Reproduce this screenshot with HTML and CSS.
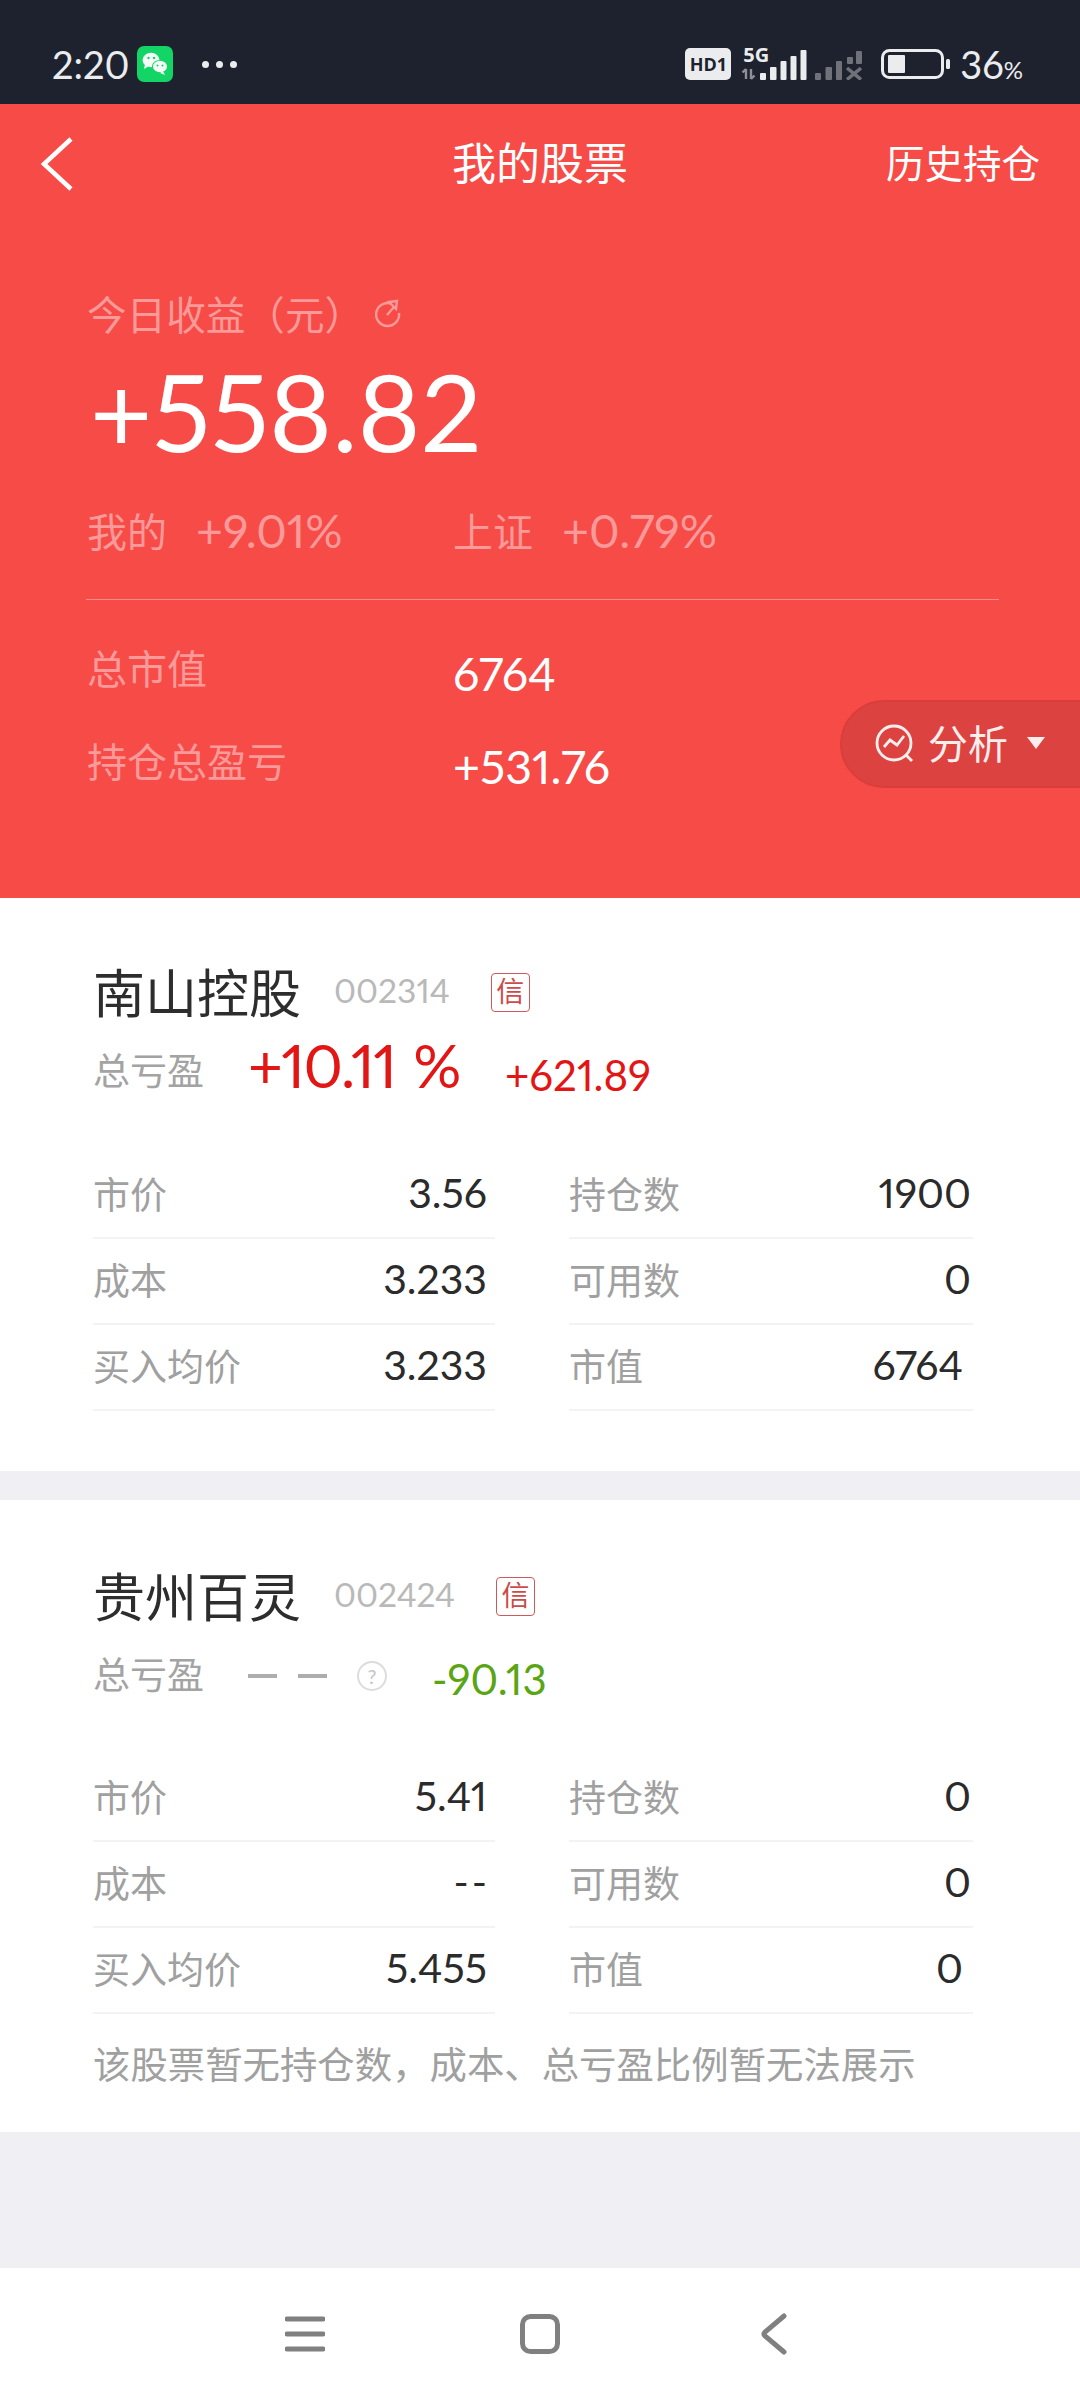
FILE: index.html
```html
<!DOCTYPE html>
<html>
<head>
    <meta name="viewport" content="width=device-width, initial-scale=1">
    <link rel="stylesheet" href="styles.css">
</head>
<body>
    <div class="status-bar">
        <span class="clock">2:20</span>
        <svg class="wechat" width="36" height="36" viewBox="0 0 36 36">
            <rect width="36" height="36" rx="7" fill="#12d566"/>
            <ellipse cx="14" cy="14" rx="8.5" ry="7.2" fill="#f4fbf6"/>
            <path d="M8 18l-1 5 5-3z" fill="#f4fbf6"/>
            <ellipse cx="23" cy="20.5" rx="8" ry="6.6" fill="#12d566"/>
            <ellipse cx="23" cy="20.5" rx="7" ry="5.8" fill="#f4fbf6"/>
            <path d="M26 25l2 4-5-2z" fill="#f4fbf6"/>
            <circle cx="11.5" cy="12" r="1.2" fill="#12d566"/>
            <circle cx="17" cy="12" r="1.2" fill="#12d566"/>
            <circle cx="20.5" cy="19.5" r="1" fill="#12d566"/>
            <circle cx="25.5" cy="19.5" r="1" fill="#12d566"/>
        </svg>
        <span class="status-dots"><i></i><i></i><i></i></span>
        <span class="status-space"></span>
        <span class="hd-badge">HD1</span>
        <div class="signal">
            <svg width="121" height="32" viewBox="0 0 121 32">
                <path d="M5 21v10M1.5 24.5L5 21M10 21v10M10 31l3.500-3.500" stroke="#8d9096" stroke-width="2.400" fill="none"/>
                <g fill="#ebecee">
                    <rect x="19" y="25" width="6" height="7" rx="1"/>
                    <rect x="29" y="19" width="6.500" height="13" rx="1"/>
                    <rect x="39.500" y="13" width="6" height="19" rx="1"/>
                    <rect x="49.500" y="8" width="6" height="24" rx="1"/>
                    <rect x="59.500" y="2" width="6" height="30" rx="1"/>
                </g>
                <g fill="#6f7278">
                    <rect x="74" y="25" width="6" height="7" rx="1"/>
                    <rect x="84.500" y="19" width="6.500" height="13" rx="1"/>
                    <rect x="95" y="13" width="6" height="19" rx="1"/>
                    <rect x="106" y="9" width="6" height="7" rx="1"/>
                    <rect x="115" y="3" width="6" height="13" rx="1"/>
                    <path d="M106 20l14 11.500M120 20l-14 11.500" stroke="#6f7278" stroke-width="3.500"/>
                </g>
            </svg>
            <span class="signal-5g">5G</span>
        </div>
        <svg class="battery" width="70" height="30" viewBox="0 0 70 30">
            <rect x="1.500" y="1.500" width="60" height="27" rx="7" fill="none" stroke="#ebecee" stroke-width="3"/>
            <rect x="7" y="6" width="17" height="18" rx="1" fill="#ebecee"/>
            <rect x="65" y="10" width="4" height="10" rx="1.500" fill="#ebecee"/>
        </svg>
        <span class="battery-num">36<small>%</small></span>
    </div>

    <div class="top-panel">
        <div class="nav-row">
            <svg class="back" width="34" height="54" viewBox="0 0 34 54">
                <path d="M31 2L4 27l27 25" fill="none" stroke="#fff" stroke-width="4.500"/>
            </svg>
            <span class="nav-title">我的股票</span>
            <span class="nav-link">历史持仓</span>
        </div>

        <div class="today-label">
            今日收益（元）
            <svg width="30" height="30" viewBox="0 0 30 30">
                <path d="M19 4.500a11.500 11.500 0 1 0 8 9.500" fill="none" stroke="#fb9a98" stroke-width="2.400"/>
                <path d="M17 3l8-1-1 8zM22 8l-7 8" fill="none" stroke="#fb9a98" stroke-width="2.400"/>
            </svg>
        </div>
        <div class="today-value">+558.82</div>

        <div class="compare-row">
            <span class="compare-item"><span class="dim-label">我的</span><span class="dim-value">+9.01%</span></span>
            <span class="compare-item"><span class="dim-label">上证</span><span class="dim-value">+0.79%</span></span>
        </div>

        <div class="panel-line"></div>

        <div class="total-row">
            <span class="dim-label total-label">总市值</span>
            <span class="total-value">6764</span>
        </div>
        <div class="total-row">
            <span class="dim-label total-label">持仓总盈亏</span>
            <span class="total-value">+531.76</span>
        </div>

        <div class="analysis-pill">
            <svg width="42" height="42" viewBox="0 0 42 42">
                <circle cx="20" cy="20" r="17" fill="none" stroke="#fdeeee" stroke-width="2.800"/>
                <path d="M32 32l6 6" stroke="#fdeeee" stroke-width="2.800"/>
                <path d="M10 24l6-7 7 5 7-9" fill="none" stroke="#fdeeee" stroke-width="2.800"/>
            </svg>
            <span class="pill-text">分析</span>
            <i class="pill-arrow"></i>
        </div>
    </div>

    <div class="stock-card">
        <div class="stock-head">
            <span class="stock-name">南山控股</span>
            <span class="stock-code">002314</span>
            <span class="credit-tag">信</span>
        </div>
        <div class="stock-summary">
            <span class="summary-label">总亏盈</span>
            <span class="summary-pct up">+10.11 %</span>
            <span class="summary-amt up">+621.89</span>
        </div>
        <div class="stock-grid">
            <div class="cell"><span>市价</span><b>3.56</b></div>
            <div class="cell"><span>持仓数</span><b>1900</b></div>
            <div class="cell"><span>成本</span><b>3.233</b></div>
            <div class="cell"><span>可用数</span><b>0</b></div>
            <div class="cell"><span>买入均价</span><b>3.233</b></div>
            <div class="cell cell-inset"><span>市值</span><b>6764</b></div>
        </div>
    </div>

    <div class="stock-card second">
        <div class="stock-head">
            <span class="stock-name">贵州百灵</span>
            <span class="stock-code">002424</span>
            <span class="credit-tag">信</span>
        </div>
        <div class="stock-summary">
            <span class="summary-label">总亏盈</span>
            <span class="summary-dash"><i></i><i></i></span>
            <span class="help-dot">?</span>
            <span class="summary-amt down">-90.13</span>
        </div>
        <div class="stock-grid">
            <div class="cell"><span>市价</span><b>5.41</b></div>
            <div class="cell"><span>持仓数</span><b>0</b></div>
            <div class="cell"><span>成本</span><b class="no-value">--</b></div>
            <div class="cell"><span>可用数</span><b>0</b></div>
            <div class="cell"><span>买入均价</span><b>5.455</b></div>
            <div class="cell cell-inset"><span>市值</span><b>0</b></div>
        </div>
        <div class="stock-note">该股票暂无持仓数，成本、总亏盈比例暂无法展示</div>
    </div>

    <div class="page-fill"></div>

    <div class="system-nav">
        <svg width="40" height="36" viewBox="0 0 40 36">
            <path d="M2 3h36M2 18h36M2 33h36" stroke="#808080" stroke-width="5" stroke-linecap="round"/>
        </svg>
        <svg class="nav-home" width="40" height="40" viewBox="0 0 40 40">
            <rect x="2.500" y="2.500" width="35" height="35" rx="8" fill="none" stroke="#808080" stroke-width="5"/>
        </svg>
        <svg width="28" height="42" viewBox="0 0 28 42">
            <path d="M24 3L5 19q-2 2 0 4l19 16" fill="none" stroke="#808080" stroke-width="5" stroke-linecap="round"/>
        </svg>
    </div>
</body>
</html>
```

FILE: styles.css
```css
body {
    margin: 0;
    width: 1080px;
    height: 2400px;
    display: flex;
    flex-direction: column;
    background: #efeff4;
    font-family: Lato, "Noto Sans CJK SC", sans-serif;
    font-variant-numeric: proportional-nums;
    overflow: hidden;
}
.status-bar {
    height: 104px;
    padding: 24px 57px 0 52px;
    box-sizing: border-box;
    display: flex;
    align-items: center;
    background: #1e222e;
    color: #ebecee;
}
.clock {
    font-size: 38px;
    margin-right: 7px;
}
.wechat {
    margin-right: 29px;
}
.status-dots {
    display: flex;
    gap: 7px;
}
.status-dots i {
    width: 7px;
    height: 7px;
    border-radius: 50%;
    background: #ebecee;
}
.status-space {
    flex: 1;
}
.hd-badge {
    width: 46px;
    height: 32px;
    margin-right: 10px;
    border-radius: 5px;
    background: #ebecee;
    color: #1e222e;
    font: 700 18px/32px "Open Sans", sans-serif;
    text-align: center;
}
.signal {
    position: relative;
    width: 121px;
    height: 32px;
    margin-right: 19px;
}
.signal svg {
    display: block;
}
.signal-5g {
    position: absolute;
    left: 2px;
    top: -3px;
    color: #ebecee;
    font: 700 20px/20px "Open Sans", sans-serif;
}
.battery {
    margin-right: 9px;
}
.battery-num {
    font-size: 38px;
}
.battery-num small {
    font-size: 24px;
}

.top-panel {
    position: relative;
    height: 794px;
    background: #f74b48;
    color: #fff;
    padding: 0 40px 0 87px;
    box-sizing: border-box;
}
.nav-row {
    position: relative;
    height: 114px;
    display: flex;
    align-items: center;
    justify-content: center;
}
.back {
    position: absolute;
    left: -47px;
    top: 33px;
}
.nav-title {
    font-size: 44px;
    margin-left: -47px;
}
.nav-link {
    position: absolute;
    right: 0;
    font-size: 38.500px;
}
.today-label {
    margin-top: 64px;
    display: flex;
    align-items: center;
    height: 60px;
    font-size: 39.600px;
    color: #fb9a98;
}
.today-label svg {
    margin: 4px 0 0 8px;
}
.today-value {
    margin: 9px 0 0 3px;
    font-size: 107.500px;
    line-height: 120px;
}
.compare-row {
    margin-top: 31px;
    display: flex;
    height: 56px;
    align-items: center;
}
.compare-item {
    width: 366px;
    display: flex;
    align-items: center;
    gap: 29px;
}
.dim-label {
    font-size: 40px;
    color: #fb9a98;
}
.dim-value {
    font-size: 46.500px;
    color: #fb9a98;
}
.panel-line {
    margin: 41px 0 0 -1px;
    width: 913px;
    height: 1px;
    background: #fa8d8b;
}
.total-row {
    height: 60px;
    display: flex;
    align-items: center;
    margin-top: 43px;
}
.total-row + .total-row {
    margin-top: 33px;
}
.total-label {
    width: 366px;
    margin-bottom: 13px;
}
.total-value {
    font-size: 46.500px;
}
.analysis-pill {
    position: absolute;
    right: -44px;
    top: 596px;
    width: 284px;
    height: 88px;
    box-sizing: border-box;
    padding-left: 32px;
    display: flex;
    align-items: center;
    gap: 12px;
    border: 2px solid #d93e3b;
    border-radius: 44px;
    background: #dc4340;
    color: #fdeeee;
    font-size: 40px;
}
.pill-text {
    margin-bottom: 5px;
}
.pill-arrow {
    margin: 0 0 3px 7px;
    width: 0;
    height: 0;
    border-left: 9px solid transparent;
    border-right: 9px solid transparent;
    border-top: 12px solid #fdeeee;
}

.stock-card {
    background: #fff;
    padding: 58px 0 60px 93px;
}
.stock-card.second {
    margin-top: 29px;
    padding-top: 60px;
    padding-bottom: 41px;
}
.stock-head {
    display: flex;
    align-items: center;
    height: 68px;
}
.stock-name {
    width: 242px;
    font-size: 52px;
    color: #2d2d2d;
}
.stock-code {
    margin: 0 41px 0 -1px;
    font-size: 33.500px;
    color: #b9b9b9;
}
.credit-tag {
    width: 39px;
    height: 39px;
    margin-top: 4px;
    box-sizing: border-box;
    border: 1.500px solid #cc5a58;
    border-radius: 4px;
    color: #cc4b49;
    font-size: 28px;
    line-height: 35px;
    text-align: center;
}
.stock-summary {
    display: flex;
    align-items: center;
    height: 64px;
    margin-top: 13px;
}
.summary-label {
    width: 155px;
    font-size: 37px;
    color: #a3a3a3;
}
.summary-pct {
    width: 257px;
    margin-bottom: 8px;
    font-size: 60px;
    letter-spacing: -1.500px;
    word-spacing: 4px;
}
.summary-amt {
    margin-top: 12px;
    font-size: 42px;
}
.up {
    color: #e31616;
}
.down {
    color: #5aa514;
}
.summary-dash {
    display: flex;
    gap: 21px;
    width: 109px;
    margin-top: 6px;
}
.summary-dash i {
    width: 29px;
    height: 4px;
    background: #adadad;
}
.help-dot {
    width: 30px;
    height: 30px;
    margin: 6px 45px 0 0;
    box-sizing: border-box;
    border: 2px solid #dcdcdc;
    border-radius: 50%;
    color: #c4c4c4;
    font-size: 20px;
    line-height: 26px;
    text-align: center;
}
.stock-grid {
    margin-top: 52px;
    width: 880px;
    display: grid;
    grid-template-columns: 402px 404px;
    column-gap: 74px;
}
.second .stock-grid {
    margin-top: 51px;
}
.cell {
    height: 86px;
    box-sizing: border-box;
    display: flex;
    justify-content: space-between;
    align-items: center;
    padding: 0 8px 5px 0;
    border-bottom: 2px solid #f3f3f3;
}
.cell:nth-child(even) {
    padding-right: 2px;
}
.cell span {
    font-size: 37px;
    color: #a0a0a0;
}
.cell b {
    font-weight: 400;
    font-size: 41px;
    color: #2b2b2b;
}
.cell.cell-inset {
    padding-right: 10px;
}
.no-value {
    letter-spacing: 3px;
    margin-right: -3px;
}
.stock-note {
    margin-top: 25px;
    font-size: 37.400px;
    line-height: 52px;
    color: #a0a0a0;
}
.page-fill {
    flex: 1;
}
.system-nav {
    height: 132px;
    background: #fff;
    display: flex;
    align-items: center;
    justify-content: space-between;
    padding: 0 292px 0 285px;
    box-sizing: border-box;
}
.nav-home {
    margin-right: 6px;
}
```
